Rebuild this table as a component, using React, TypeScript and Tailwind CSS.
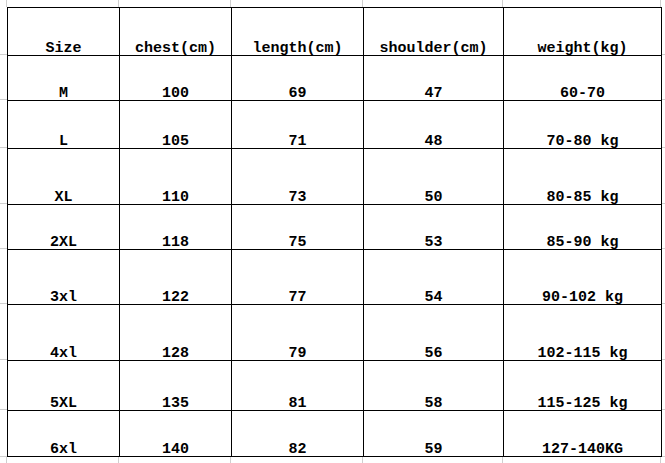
import React from "react";

const cols = [112, 112, 132, 140, 159];
const header = ["Size", "chest(cm)", "length(cm)", "shoulder(cm)", "weight(kg)"];
const rows = [
  { h: 45, cells: ["M", "100", "69", "47", "60-70"] },
  { h: 48, cells: ["L", "105", "71", "48", "70-80 kg"] },
  { h: 56, cells: ["XL", "110", "73", "50", "80-85 kg"] },
  { h: 45, cells: ["2XL", "118", "75", "53", "85-90 kg"] },
  { h: 55, cells: ["3xl", "122", "77", "54", "90-102 kg"] },
  { h: 56, cells: ["4xl", "128", "79", "56", "102-115 kg"] },
  { h: 50, cells: ["5XL", "135", "81", "58", "115-125 kg"] },
  { h: 47, cells: ["6xl", "140", "82", "59", "127-140KG"] },
];

function GridStrip({ h }: { h: number }) {
  return (
    <div className="flex" style={{ height: h }}>
      <div className="w-[7px] shrink-0 border-r border-[#cfcfcf]" />
      {cols.map((w, i) => (
        <div key={i} className="shrink-0 border-r border-[#cfcfcf]" style={{ width: i === 4 ? w - 1 : w }} />
      ))}
      <div className="flex-1" />
    </div>
  );
}

function Row({ h, cells, last }: { h: number; cells: string[]; last?: boolean }) {
  return (
    <div className="flex" style={{ height: h }}>
      <div className="w-[7px] shrink-0 border-b border-[#cfcfcf]" />
      {cells.map((c, i) => (
        <div
          key={i}
          className={`shrink-0 flex items-end justify-center border-l border-t border-black leading-[12px] ${i === 4 ? "border-r" : ""} ${last ? "border-b" : ""}`}
          style={{ width: cols[i] }}
        >
          <span className="whitespace-pre">{c}</span>
        </div>
      ))}
      <div className="flex-1 border-b border-[#cfcfcf]" />
    </div>
  );
}

export default function App() {
  return (
    <div
      className="w-[665px] h-[463px] bg-white text-black font-bold text-[15px] overflow-hidden"
      style={{ fontFamily: '"Liberation Mono", monospace' }}
    >
      <GridStrip h={7} />
      <Row h={48} cells={header} />
      {rows.map((r, i) => (
        <Row key={i} h={r.h} cells={r.cells} last={i === rows.length - 1} />
      ))}
      <GridStrip h={7} />
    </div>
  );
}
